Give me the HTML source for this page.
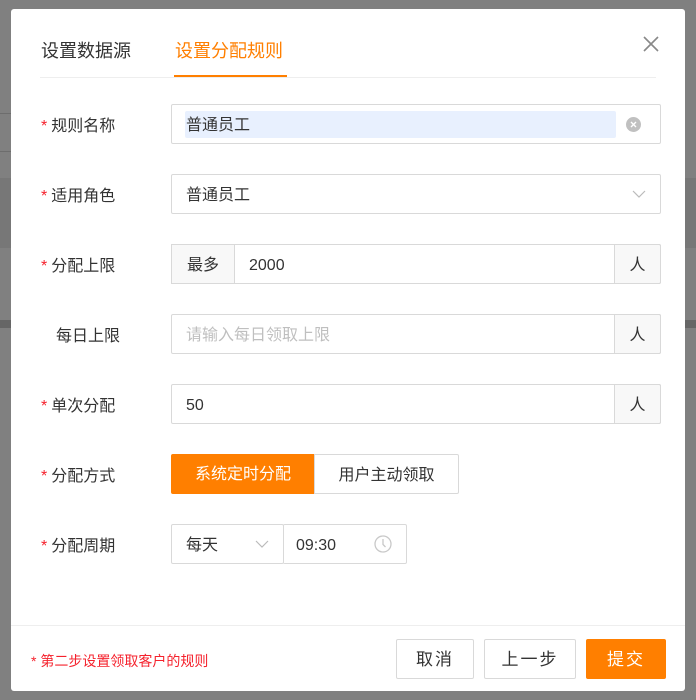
<!DOCTYPE html>
<html><head><meta charset="utf-8"><style>
*{box-sizing:border-box;margin:0;padding:0}
body{width:696px;height:700px;background:#808080;position:relative;overflow:hidden;font-family:"Liberation Sans","Noto Sans CJK SC",sans-serif;color:#333}
.a{position:absolute}
.modal{left:11px;top:9px;width:674px;height:682px;background:#fff;border-radius:3px}
.tab{top:38px;font-size:18px;line-height:26px}
.lbl{left:41px;font-size:16px;line-height:20px;color:#333;margin-top:2px}
.lbl b{color:#f5222d;font-weight:normal;margin-right:4px}
.inp{left:171px;width:490px;height:40px;border:1px solid #d9d9d9;border-radius:2px;font-size:16px;line-height:41px;padding-left:14px}
.add{position:absolute;top:-1px;right:-1px;width:47px;height:40px;border:1px solid #d9d9d9;background:#f8f8f8;text-align:center;line-height:41px;border-radius:0 2px 2px 0;color:#333}
.btn{top:639px;height:40px;border:1px solid #d9d9d9;border-radius:2px;text-align:center;line-height:40px;font-size:17px;background:#fff;letter-spacing:2px}
</style></head><body>
<div class="a" style="left:0;top:113px;width:11px;height:1px;background:#6d6d6d"></div>
<div class="a" style="left:0;top:151px;width:11px;height:1px;background:#6d6d6d"></div>
<div class="a" style="left:0;top:178px;width:11px;height:70px;background:#777"></div>
<div class="a" style="left:0;top:320px;width:11px;height:8px;background:#666"></div>
<div class="a" style="left:685px;top:178px;width:11px;height:70px;background:#777"></div>
<div class="a" style="left:685px;top:320px;width:11px;height:8px;background:#666"></div>
<div class="a modal"></div>
<div class="a tab" style="left:41px;color:#333">设置数据源</div>
<div class="a tab" style="left:175px;color:#ff7f00">设置分配规则</div>
<div class="a" style="left:40px;top:77px;width:616px;height:1px;background:#eee"></div>
<div class="a" style="left:174px;top:75px;width:113px;height:2px;background:#ff7f00"></div>
<svg class="a" style="left:643px;top:36px" width="16" height="16"><path d="M1 1L15 15M15 1L1 15" stroke="#888" stroke-width="1.6"/></svg>

<div class="a lbl" style="top:115px"><b>*</b>规则名称</div>
<div class="a inp" style="top:104px"><div class="a" style="left:13px;top:6px;width:431px;height:27px;background:#e8f0fe;border-radius:2px"></div><span style="position:relative">普通员工</span>
<svg class="a" style="left:454px;top:12px" width="15" height="15"><circle cx="7.5" cy="7.5" r="7.5" fill="#c0c0c0"/><path d="M5 5L10 10M10 5L5 10" stroke="#fff" stroke-width="1.4"/></svg></div>

<div class="a lbl" style="top:185px"><b>*</b>适用角色</div>
<div class="a inp" style="top:174px">普通员工<svg class="a" style="left:460px;top:14px" width="14" height="10"><path d="M1 2L7 8L13 2" fill="none" stroke="#bbb" stroke-width="1.2"/></svg></div>

<div class="a lbl" style="top:255px"><b>*</b>分配上限</div>
<div class="a inp" style="top:244px;padding-left:77px"><div class="a" style="left:-1px;top:-1px;width:64px;height:40px;border:1px solid #d9d9d9;background:#f8f8f8;text-align:center;line-height:41px">最多</div>2000<div class="add">人</div></div>

<div class="a lbl" style="top:325px;left:56px">每日上限</div>
<div class="a inp" style="top:314px;color:#bfbfbf">请输入每日领取上限<div class="add">人</div></div>

<div class="a lbl" style="top:395px"><b>*</b>单次分配</div>
<div class="a inp" style="top:384px">50<div class="add">人</div></div>

<div class="a lbl" style="top:465px"><b>*</b>分配方式</div>
<div class="a" style="left:171px;top:454px;width:144px;height:40px;background:#ff7f00;color:#fff;font-size:16px;line-height:42px;text-align:center;border-radius:2px 0 0 2px">系统定时分配</div>
<div class="a" style="left:314px;top:454px;width:145px;height:40px;border:1px solid #d9d9d9;font-size:16px;line-height:41px;text-align:center;border-radius:0 2px 2px 0">用户主动领取</div>

<div class="a lbl" style="top:535px"><b>*</b>分配周期</div>
<div class="a inp" style="top:524px;width:113px">每天<svg class="a" style="left:83px;top:14px" width="14" height="10"><path d="M1 2L7 8L13 2" fill="none" stroke="#bbb" stroke-width="1.2"/></svg></div>
<div class="a inp" style="top:524px;left:283px;width:124px;border-left:none;padding-left:13px">09:30<svg class="a" style="left:91px;top:10px" width="18" height="18"><circle cx="9" cy="9" r="8" fill="none" stroke="#c8c8c8" stroke-width="1.3"/><path d="M9 4V9.5L11.5 12" fill="none" stroke="#c8c8c8" stroke-width="1.3"/></svg></div>

<div class="a" style="left:11px;top:625px;width:674px;height:1px;background:#eee"></div>
<div class="a" style="left:31px;top:651px;font-size:14px;line-height:20px;color:#f5222d">* 第二步设置领取客户的规则</div>
<div class="a btn" style="left:396px;width:78px">取消</div>
<div class="a btn" style="left:484px;width:92px">上一步</div>
<div class="a btn" style="left:586px;width:80px;background:#ff7f00;border-color:#ff7f00;color:#fff">提交</div>
</body></html>
